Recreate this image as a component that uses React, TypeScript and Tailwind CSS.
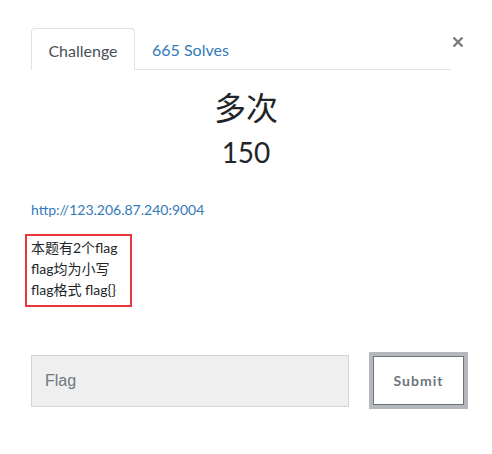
import React from 'react';

const App: React.FC = () => {
  return (
    <div className="relative w-[492px] h-[454px] bg-white font-['Lato','Noto_Sans_CJK_SC',sans-serif] text-[#212529]">
      <button className="absolute left-[452px] top-[36px] w-[12px] h-[12px] text-[#7b7b7b]">
        <svg viewBox="0 0 12 12" width="12" height="12">
          <path d="M1.5 1.5 L10.5 10.5 M10.5 1.5 L1.5 10.5" stroke="currentColor" strokeWidth="2.4" />
        </svg>
      </button>

      <div className="pt-[29px] pl-[31px] pr-[41px]">
        <div className="flex items-end h-[41px] border-b border-[#dee2e6]">
          <div className="-mb-px flex items-center justify-center pt-[3px] w-[104px] h-[42px] border border-[#dee2e6] border-b-white rounded-t-[4px] text-[16px] text-[#495057]">
            Challenge
          </div>
          <div className="flex items-center pt-[2px] h-[41px] pl-[17px] text-[16px] text-[#337ab7]">665 Solves</div>
        </div>

        <div className="-mr-[10px]">
          <h2 className="mt-[19px] text-center text-[32px] leading-[38px] font-normal">多次</h2>
          <h3 className="mt-[8px] text-center text-[28px] leading-[34px] font-normal">150</h3>
        </div>

        <a className="block mt-[31px] text-[14px] leading-[20px] text-[#337ab7]">http://123.206.87.240:9004</a>

        <div className="mt-[14px] -ml-[6px] w-[107px] border-2 border-[#e8363b] pl-[4px] pt-[1px] pb-[5px] text-[14px] leading-[21px] text-[#212529] whitespace-nowrap">
          <p>本题有2个flag</p>
          <p>flag均为小写</p>
          <p>flag格式 flag{'{}'}</p>
        </div>

        <div className="mt-[45px] flex items-center gap-[20px]">
          <div className="shrink-0 w-[318px] h-[52px] bg-[#efefef] border border-[#d1d4d9] flex items-center pl-[13px] font-['Liberation_Sans',sans-serif] text-[16px] text-[#6f777f]">
            Flag
          </div>
          <button className="shrink-0 w-[99px] h-[57px] border-[4px] border-[#b5b8bd] bg-white">
            <div className="w-full h-full border border-[#6c757d] flex items-center justify-center text-[14px] font-bold tracking-[1px] text-[#6c757d]">
              Submit
            </div>
          </button>
        </div>
      </div>
    </div>
  );
};

export default App;
